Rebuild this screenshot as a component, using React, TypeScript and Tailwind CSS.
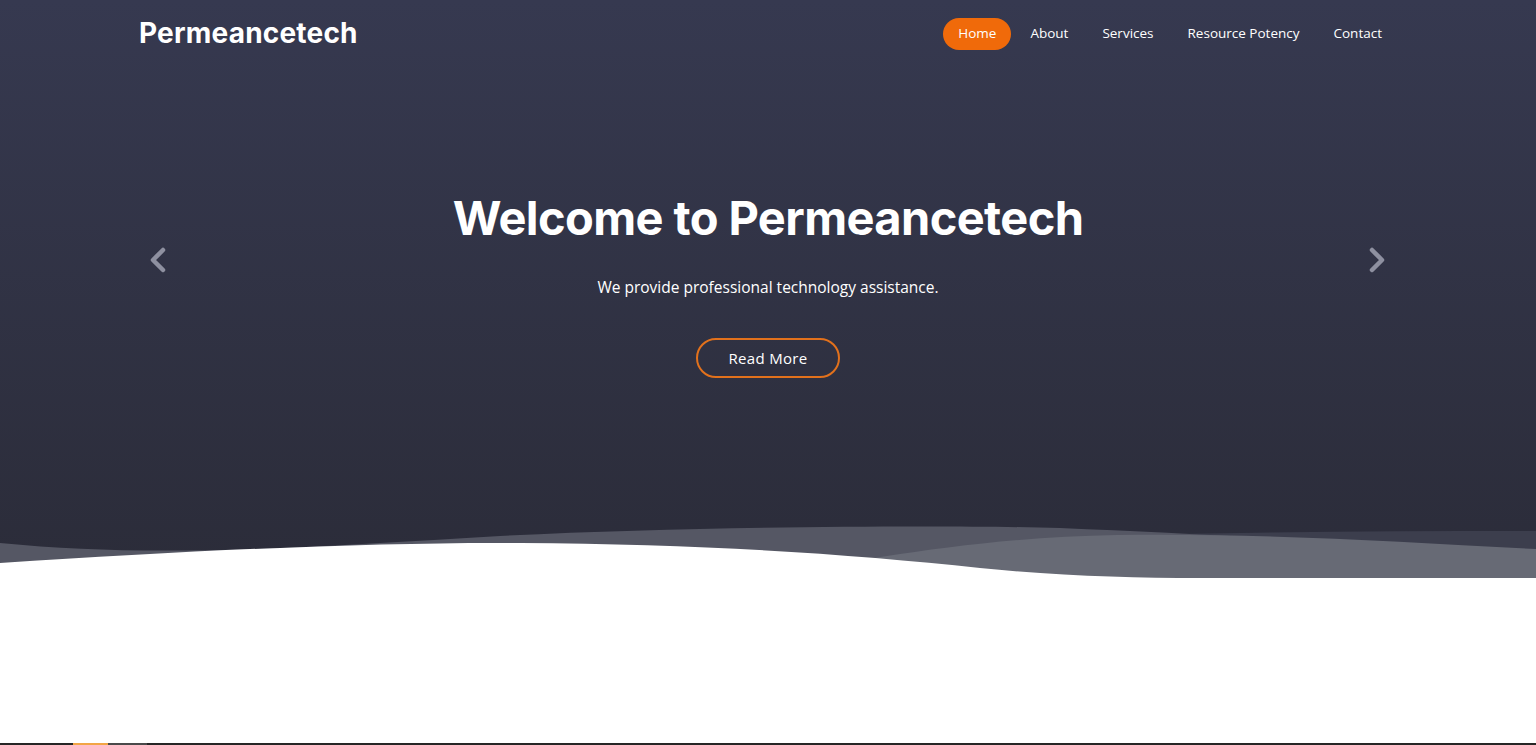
import React from 'react';

const navItems = ['Home', 'About', 'Services', 'Resource Potency', 'Contact'];

const Chevron: React.FC<{ dir: 'left' | 'right' }> = ({ dir }) => (
  <svg width="20" height="28" viewBox="0 0 20 28" fill="none">
    <polyline
      points={dir === 'left' ? '15,4 5,14 15,24' : '5,4 15,14 5,24'}
      stroke="#8e90a0"
      strokeWidth="4.5"
      strokeLinecap="round"
      strokeLinejoin="round"
    />
  </svg>
);

const Waves: React.FC = () => (
  <svg
    className="absolute bottom-0 left-0 w-full h-[60px]"
    viewBox="0 0 1536 60"
    preserveAspectRatio="none"
  >
    <path d="M600,60 C900,16 1200,13 1536,13 L1536,60 Z" fill="#3c3e4d" />
    <path
      d="M0,25 C150,40 300,30 500,18 C700,8 950,7 1060,10 C1250,18 1450,30 1536,34 L1536,60 L0,60 Z"
      fill="#555764"
    />
    <path d="M760,60 C860,42 980,19 1117,17 C1260,15 1400,24 1536,31 L1536,60 Z" fill="#676a75" />
    <path
      d="M0,45 C200,32 380,24 520,25 C700,26 850,36 980,50 C1060,58 1130,60 1200,60 L1536,60 L0,60 Z"
      fill="#ffffff"
    />
  </svg>
);

const App: React.FC = () => {
  return (
    <div className="min-h-screen bg-white font-['Open_Sans',sans-serif]">
      <section className="relative h-[578px] bg-gradient-to-b from-[#363950] to-[#2b2c39] overflow-hidden">
        <header className="max-w-[1258px] mx-auto h-[68px] flex items-center justify-between">
          <a className="text-[28px] font-bold text-white tracking-[0.2px] font-['Inter',sans-serif] -mt-[2px]">
            Permeancetech
          </a>
          <nav className="flex items-center gap-[4px] -mt-[1px]">
            {navItems.map(item => (
              <a
                key={item}
                className={`px-[15px] h-[32px] flex items-center rounded-full text-[13.5px] text-white ${
                  item === 'Home' ? 'bg-[#f06a0a]' : ''
                }`}
              >
                {item}
              </a>
            ))}
          </nav>
        </header>

        <button className="absolute left-[148px] top-[246px]">
          <Chevron dir="left" />
        </button>
        <button className="absolute right-[149px] top-[246px]">
          <Chevron dir="right" />
        </button>

        <div className="flex flex-col items-center text-center">
          <h1 className="mt-[121px] text-[47px] leading-[58px] font-bold text-white font-['Inter',sans-serif] tracking-[-0.6px]">
            Welcome to Permeancetech
          </h1>
          <p className="mt-[28px] text-[15.5px] leading-[24px] text-white">
            We provide professional technology assistance.
          </p>
          <a className="mt-[39px] w-[144px] h-[40px] flex items-center justify-center rounded-full border-2 border-[#e2711c] text-[15px] font-medium text-white tracking-[0.3px]">
            Read More
          </a>
        </div>

        <Waves />
      </section>

      <section className="h-[165px] bg-white" />
      <div className="h-[2px] bg-[#262626] flex">
        <div className="ml-[73px] w-[35px] bg-[#f2a545]" />
        <div className="w-[39px] bg-[#4a4a4a]" />
      </div>
    </div>
  );
};

export default App;
